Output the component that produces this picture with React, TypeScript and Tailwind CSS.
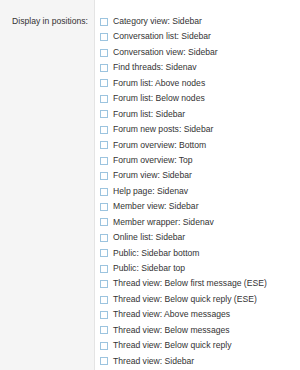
const positions = [
  "Category view: Sidebar",
  "Conversation list: Sidebar",
  "Conversation view: Sidebar",
  "Find threads: Sidenav",
  "Forum list: Above nodes",
  "Forum list: Below nodes",
  "Forum list: Sidebar",
  "Forum new posts: Sidebar",
  "Forum overview: Bottom",
  "Forum overview: Top",
  "Forum view: Sidebar",
  "Help page: Sidenav",
  "Member view: Sidebar",
  "Member wrapper: Sidenav",
  "Online list: Sidebar",
  "Public: Sidebar bottom",
  "Public: Sidebar top",
  "Thread view: Below first message (ESE)",
  "Thread view: Below quick reply (ESE)",
  "Thread view: Above messages",
  "Thread view: Below messages",
  "Thread view: Below quick reply",
  "Thread view: Sidebar",
];

export default function App() {
  return (
    <div
      className="flex h-[370px] w-[300px] bg-white text-[8.6px] text-[#333333]"
      style={{ fontFamily: '"Liberation Sans", Arial, sans-serif' }}
    >
      {/* Label column */}
      <div className="w-[95px] shrink-0 border-r border-[#e4e4e4] bg-[#f5f5f5] pt-[14px] pr-[6px] text-right leading-[15.43px]">
        Display in positions:
      </div>

      {/* Options */}
      <ul className="flex flex-col pt-[14px] pl-[5px] leading-[15.43px]">
        {positions.map((p) => (
          <li key={p} className="flex items-center gap-[5px] whitespace-nowrap">
            <span className="h-[8px] w-[8px] shrink-0 border border-[#9cc4df] bg-white" />
            {p}
          </li>
        ))}
      </ul>
    </div>
  );
}
